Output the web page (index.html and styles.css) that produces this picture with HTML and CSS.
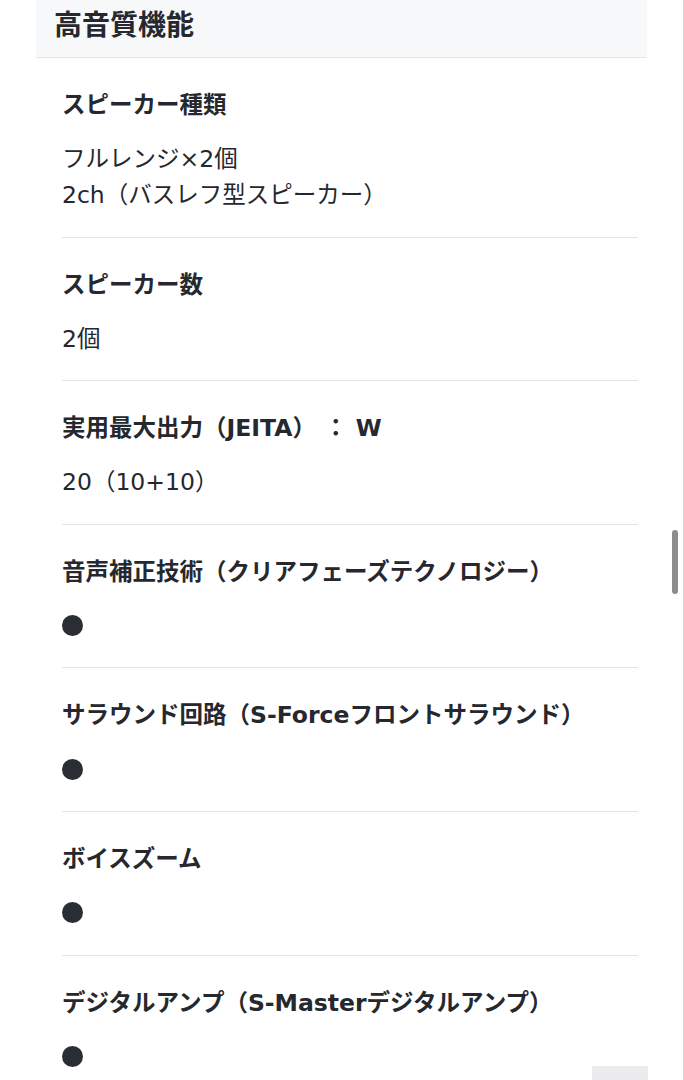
FILE: index.html
```html
<!DOCTYPE html>
<html lang="ja">
<head>
<meta charset="utf-8">
<link rel="stylesheet" href="styles.css">
</head>
<body>
<div class="page">
  <section class="spec">
    <h2 class="spec-head">高音質機能</h2>
    <dl class="spec-list">
      <div class="row">
        <dt class="name">スピーカー種類</dt>
        <dd class="val">フルレンジ×2個<br>2ch（バスレフ型スピーカー）</dd>
      </div>
      <div class="row">
        <dt class="name">スピーカー数</dt>
        <dd class="val">2個</dd>
      </div>
      <div class="row">
        <dt class="name">実用最大出力（JEITA） ： W</dt>
        <dd class="val">20（10+10）</dd>
      </div>
      <div class="row">
        <dt class="name">音声補正技術（クリアフェーズテクノロジー）</dt>
        <dd class="val"><span class="dot" aria-label="●"></span></dd>
      </div>
      <div class="row">
        <dt class="name">サラウンド回路（S-Forceフロントサラウンド）</dt>
        <dd class="val"><span class="dot" aria-label="●"></span></dd>
      </div>
      <div class="row">
        <dt class="name">ボイスズーム</dt>
        <dd class="val"><span class="dot" aria-label="●"></span></dd>
      </div>
      <div class="row">
        <dt class="name">デジタルアンプ（S-Masterデジタルアンプ）</dt>
        <dd class="val"><span class="dot" aria-label="●"></span></dd>
      </div>
    </dl>
  </section>
</div>
<div class="scrollbar"></div>
<div class="totop"></div>
</body>
</html>
```

FILE: styles.css
```css
html, body {
  margin: 0;
  padding: 0;
  background: #ffffff;
}
body {
  font-family: "DejaVu Sans", "Noto Sans CJK JP", sans-serif;
  color: #25282e;
  width: 684px;
  height: 1080px;
  overflow: hidden;
  text-spacing-trim: space-all;
}
.page {
  box-sizing: border-box;
  width: 684px;
  min-height: 1080px;
  border-right: 1px solid #d6d6d6;
  padding: 0 36px;
}
.spec-head {
  margin: 0;
  height: 58px;
  box-sizing: border-box;
  padding: 8px 18px 0;
  font-size: 28px;
  line-height: 36px;
  font-weight: 700;
  background: #f7f8fa;
  border-bottom: 1px solid #e4e5e8;
  color: #25282e;
}
.spec-list {
  margin: 0;
  padding: 0 9px 0 26px;
}
.row {
  padding: 30px 0 23.6px;
  border-bottom: 1px solid #e4e4e6;
}
.name {
  font-size: 23.5px;
  line-height: 34px;
  font-weight: 700;
  margin: 0;
}
.val {
  margin: 19px 0 0;
  font-size: 23.5px;
  line-height: 36px;
  font-weight: 400;
  display: flex;
  flex-direction: column;
  justify-content: center;
  min-height: 36px;
}
.dot {
  display: block;
  width: 21px;
  height: 21px;
  border-radius: 50%;
  background: #2a2d35;
}
.scrollbar {
  position: fixed;
  left: 672px;
  top: 530px;
  width: 6px;
  height: 64px;
  border-radius: 3px;
  background: #8c8c8c;
}
.totop {
  position: fixed;
  left: 592px;
  top: 1066px;
  width: 56px;
  height: 40px;
  background: #ececee;
}
```
